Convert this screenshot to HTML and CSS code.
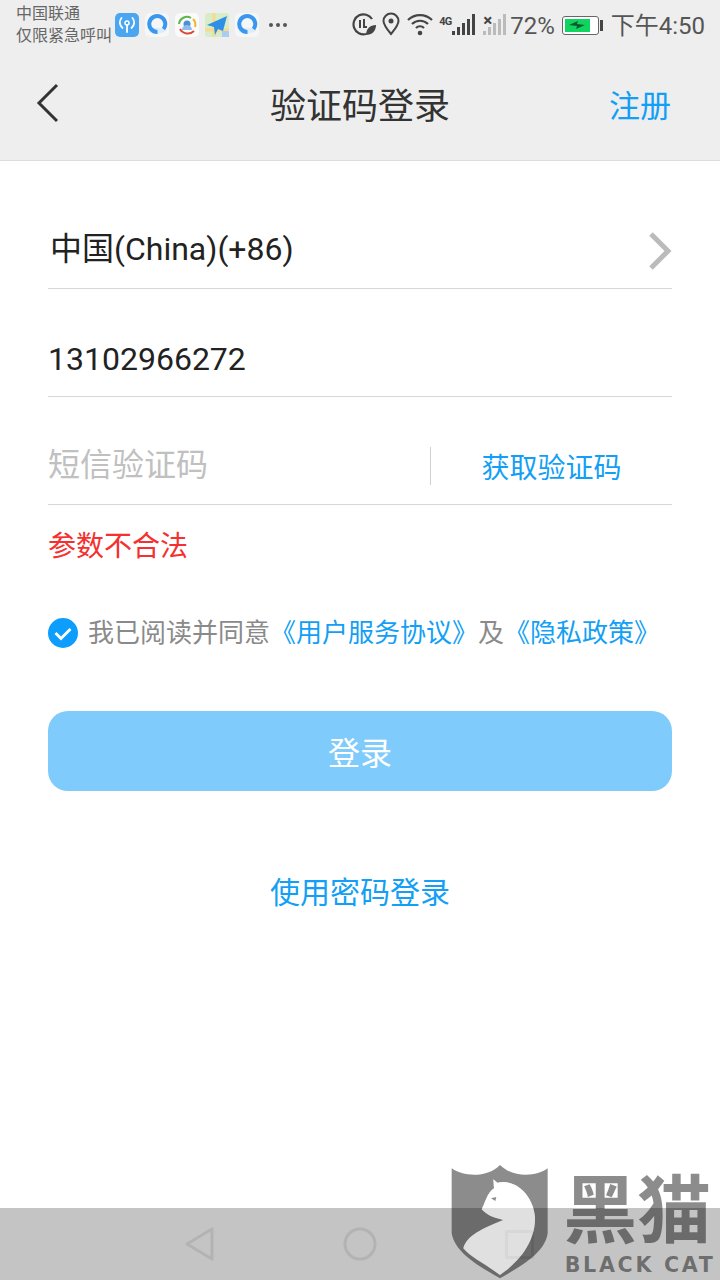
FILE: index.html
```html
<!DOCTYPE html>
<html lang="zh-CN">
<head>
    <meta charset="UTF-8">
    <meta name="viewport" content="width=device-width, initial-scale=1.0">
    <title>验证码登录</title>
    <link rel="stylesheet" href="styles.css">
</head>
<body>
    <div class="phone">
        <div class="status-bar">
            <div class="carrier">
                <span>中国联通</span>
                <span>仅限紧急呼叫</span>
            </div>
            <div class="app-icons">
                <svg class="app" viewBox="0 0 24 24">
                    <rect width="24" height="24" rx="5" fill="#4aa6f0"/>
                    <circle cx="12" cy="10" r="2" fill="none" stroke="#fff" stroke-width="1.5"/>
                    <path d="M12 12v7M7.500 15a7 7 0 0 1-1-10M16.500 15a7 7 0 0 0 1-10" fill="none" stroke="#fff" stroke-width="1.8" stroke-linecap="round"/>
                </svg>
                <svg class="app" viewBox="0 0 24 24">
                    <rect width="24" height="24" rx="5" fill="#f4f6f8"/>
                    <path d="M4 19q8 4 17-1v-3H4z" fill="#dcedfa"/>
                    <path d="M18.500 16a8 8 0 1 0-6 3" fill="none" stroke="#3a97ee" stroke-width="4"/>
                </svg>
                <svg class="app" viewBox="0 0 24 24">
                    <rect width="24" height="24" rx="5" fill="#fafafa"/>
                    <path d="M4 11a8 8 0 0 1 12-6" fill="none" stroke="#5fb548" stroke-width="2"/>
                    <path d="M18 6a8 8 0 0 1 2 8" fill="none" stroke="#f0b429" stroke-width="2"/>
                    <path d="M5 16a9 9 0 0 0 14 2" fill="none" stroke="#d9483b" stroke-width="2"/>
                    <circle cx="12" cy="11" r="3.500" fill="#4a90d9"/>
                    <path d="M7 17a5 5 0 0 1 10 0z" fill="#8fbce8"/>
                </svg>
                <svg class="app" viewBox="0 0 24 24">
                    <rect width="24" height="24" rx="3" fill="#d8ecc8"/>
                    <path d="M0 17h24M9 0v24" stroke="#f5dc8c" stroke-width="3"/>
                    <path d="M17 18h7v6h-7z" fill="#a9cdf2"/>
                    <path d="M22 3L2 12l7 2 1 8 3-6 5 2z" fill="#2f8fe6"/>
                </svg>
                <svg class="app" viewBox="0 0 24 24">
                    <rect width="24" height="24" rx="5" fill="#f4f6f8"/>
                    <path d="M4 19q8 4 17-1v-3H4z" fill="#dcedfa"/>
                    <path d="M18.500 16a8 8 0 1 0-6 3" fill="none" stroke="#3a97ee" stroke-width="4"/>
                </svg>
                <span class="more"><i></i><i></i><i></i></span>
            </div>
            <div class="sys-icons">
                <svg class="sys" width="24" height="24" viewBox="0 0 24 24">
                    <path d="M20 7a10 10 0 1 0-6 15" fill="none" stroke="#444" stroke-width="2.2"/>
                    <path d="M8 8v8M12 7v8h3" fill="none" stroke="#444" stroke-width="2"/>
                    <path d="M14 23c0-6 4-10 10-10 0 6-4 10-10 10z" fill="#444"/>
                </svg>
                <svg class="sys" width="20" height="24" viewBox="0 0 20 24">
                    <path d="M10 22C5 16 2.500 12.500 2.500 9a7.500 7.500 0 0 1 15 0c0 3.500-2.500 7-7.500 13z" fill="none" stroke="#444" stroke-width="2"/>
                    <circle cx="10" cy="9" r="2.500" fill="#444"/>
                </svg>
                <svg class="sys" width="28" height="24" viewBox="0 0 28 24">
                    <path d="M2 8a17 17 0 0 1 24 0M6 12a11.500 11.500 0 0 1 16 0M10 16a5.500 5.500 0 0 1 8 0" fill="none" stroke="#444" stroke-width="2.200"/>
                    <circle cx="14" cy="21" r="2.300" fill="#444"/>
                </svg>
                <span class="net">4G</span>
                <span class="bars">
                    <i class="b1"></i><i class="b2"></i><i class="b3"></i><i class="b4"></i><i class="b5"></i>
                </span>
                <span class="net cross">×</span>
                <span class="bars off">
                    <i class="b1"></i><i class="b2"></i><i class="b3"></i><i class="b4"></i><i class="b5"></i>
                </span>
                <span class="percent">72%</span>
                <span class="battery">
                    <span class="level">
                        <svg width="16" height="10" viewBox="0 0 16 10">
                            <path d="M0 5l9-4-1 3 8 1-9 4 1-3z" fill="#0d5a2c"/>
                        </svg>
                    </span>
                </span>
                <span class="battery-tip"></span>
                <span class="clock">下午4:50</span>
            </div>
        </div>

        <div class="top-bar">
            <svg class="back" width="24" height="40" viewBox="0 0 24 40">
                <path d="M21 2L3 20l18 18" fill="none" stroke="#333" stroke-width="3"/>
            </svg>
            <h1 class="title">验证码登录</h1>
            <a class="register">注册</a>
        </div>

        <div class="form">
            <div class="row">
                <span class="country">中国(China)(+86)</span>
                <svg width="24" height="40" viewBox="0 0 24 40">
                    <path d="M3 3l17 17L3 37" fill="none" stroke="#bbb" stroke-width="5"/>
                </svg>
            </div>
            <div class="row">
                <span class="phone-no">13102966272</span>
            </div>
            <div class="row">
                <span class="hint">短信验证码</span>
                <a class="get-code">获取验证码</a>
            </div>
            <p class="error">参数不合法</p>
            <div class="agree">
                <svg class="check" width="30" height="30" viewBox="0 0 30 30">
                    <circle cx="15" cy="15" r="15" fill="#0d9efd"/>
                    <path d="M7.500 15l5.500 5.500 9.500-9.500" fill="none" stroke="#fff" stroke-width="2.800"/>
                </svg>
                <span>我已阅读并同意</span>
                <a>《用户服务协议》</a>
                <span>及</span>
                <a>《隐私政策》</a>
            </div>
            <button class="login-btn">登录</button>
            <a class="pwd-login">使用密码登录</a>
        </div>

        <div class="nav-bar">
            <svg width="30" height="36" viewBox="0 0 30 36">
                <path d="M3 18L28 3v30z" fill="none" stroke="#b3b3b3" stroke-width="3" stroke-linejoin="round"/>
            </svg>
            <svg width="34" height="34" viewBox="0 0 34 34">
                <circle cx="17" cy="17" r="15" fill="none" stroke="#b3b3b3" stroke-width="3"/>
            </svg>
            <span class="nav-square"></span>
        </div>

        <!-- watermark sits on top of the page -->
        <svg class="watermark" width="300" height="130" viewBox="0 0 900 390">
            <path class="mark" fill-rule="evenodd" d="M95 55C130 80 200 85 240 45C280 85 350 80 383 55V250C375 310 300 350 240 385C180 350 105 310 95 250ZM220 88L232 98C290 85 340 140 345 200C348 280 290 340 240 375C200 345 150 320 130 295C140 255 190 235 250 210C230 205 205 200 185 178C195 160 200 130 222 115Z"/>
            <path class="cat" d="M220 88L232 98C290 85 340 140 345 200C348 280 290 340 240 375C200 345 150 320 130 295C140 255 190 235 250 210C230 205 205 200 185 178C195 160 200 130 222 115Z"/>
            <path class="mark" d="M213 145L229 141L226 153Z"/>
            <text class="wm-cn" x="430" y="262">黑猫</text>
            <text class="wm-en" x="434" y="365">BLACK CAT</text>
        </svg>
    </div>
</body>
</html>
```

FILE: styles.css
```css
* {
    padding: 0;
    margin: 0;
    box-sizing: border-box;
}

body {
    background-color: #ffffff;
    font-family: Roboto, "Noto Sans CJK SC", sans-serif;
}

a {
    color: #129ff5;
}

.phone {
    position: relative;
    width: 720px;
    height: 1280px;
    display: flex;
    flex-direction: column;
    overflow: hidden;
}

/* status bar */
.status-bar {
    height: 50px;
    padding: 2px 15px 0 16px;
    background-color: #eeeeee;
    display: flex;
    align-items: center;
    color: #444;
}

.carrier {
    display: flex;
    flex-direction: column;
    width: 99px;
    margin-bottom: 2px;
    font-size: 16px;
    line-height: 22px;
    color: #666;
    white-space: nowrap;
}

.app-icons {
    display: flex;
    align-items: center;
    gap: 6px;
    margin-bottom: 2px;
}

.app {
    width: 24px;
    height: 24px;
}

.more {
    display: flex;
    gap: 3px;
    margin-left: 4px;
}

.more i {
    width: 4px;
    height: 4px;
    border-radius: 50%;
    background-color: #555;
}

.sys-icons {
    margin-left: auto;
    display: flex;
    align-items: center;
}

.sys {
    margin: 0 5px 4px 0;
}

.net {
    align-self: flex-start;
    margin: 10px 1px 0 0;
    font-size: 11px;
    font-weight: 700;
    line-height: 12px;
    letter-spacing: -1px;
}

.net.cross {
    width: 10px;
    margin: 8px -10px 0 8px;
    font-size: 17px;
    letter-spacing: 0;
}

.bars {
    display: flex;
    align-items: flex-end;
    gap: 2px;
    height: 22px;
    margin-bottom: 4px;
}

.bars i {
    width: 3px;
    background-color: #444;
}

.bars.off i {
    background-color: #bbbbbb;
}

.b1 { height: 4px; }
.b2 { height: 8px; }
.b3 { height: 12px; }
.b4 { height: 16px; }
.b5 { height: 21px; }

.percent {
    margin-left: 4px;
    font-size: 24px;
    color: #555;
}

.battery {
    width: 37px;
    height: 19px;
    margin: 0 0 2px 7px;
    padding: 2px;
    border: 1px solid #666;
    border-radius: 3px;
    background-color: #fff;
}

.level {
    width: 25px;
    height: 13px;
    background-color: #0fd460;
    display: flex;
    align-items: center;
    justify-content: center;
}

.battery-tip {
    width: 3px;
    height: 11px;
    margin: 0 0 2px 1px;
    background-color: #444;
}

.clock {
    margin: 0 0 6px 8px;
    font-size: 24px;
    color: #555;
}

/* top bar */
.top-bar {
    height: 111px;
    padding: 0 49px 4px 36px;
    background-color: #eeeeee;
    border-bottom: 1px solid #dddddd;
    display: flex;
    align-items: center;
    justify-content: space-between;
    position: relative;
}

.title {
    font-size: 36px;
    font-weight: 400;
    color: #333;
    position: absolute;
    left: 0;
    right: 0;
    text-align: center;
}

.register {
    font-size: 31px;
    position: relative;
}

/* form */
.form {
    padding: 20px 48px 0;
    display: flex;
    flex-direction: column;
}

.row {
    height: 72px;
    margin-top: 36px;
    padding-bottom: 4px;
    border-bottom: 1px solid #d8d8d8;
    display: flex;
    align-items: center;
    justify-content: space-between;
}

.country {
    margin: 0 0 4px 2px;
    font-size: 32px;
    line-height: 44px;
    color: #222;
}

.phone-no {
    font-size: 32px;
    color: #222;
}

.hint {
    margin-bottom: 4px;
    font-size: 32px;
    line-height: 44px;
    color: #c0c0c0;
}

.get-code {
    width: 242px;
    height: 38px;
    margin-top: -2px;
    padding-top: 3px;
    border-left: 1px solid #d0d0d0;
    font-size: 28px;
    line-height: 38px;
    text-align: center;
}

.error {
    margin-top: 21px;
    font-size: 28px;
    line-height: 42px;
    color: #f5302e;
}

.agree {
    margin-top: 46px;
    display: flex;
    align-items: center;
    font-size: 26px;
    line-height: 38px;
    color: #8a8a8a;
    white-space: nowrap;
}

.check {
    margin-right: 10px;
}

.login-btn {
    height: 80px;
    margin-top: 59px;
    border: none;
    border-radius: 20px;
    background-color: #7ecbfc;
    color: #ffffff;
    font-family: inherit;
    font-size: 32px;
}

.pwd-login {
    margin-top: 80px;
    font-size: 30px;
    line-height: 44px;
    text-align: center;
}

/* nav bar */
.nav-bar {
    height: 72px;
    margin-top: auto;
    padding: 0 0 0 184px;
    background-color: #c4c4c4;
    display: flex;
    align-items: center;
}

.nav-bar svg:nth-child(2) {
    margin-left: 129px;
}

.nav-square {
    width: 29px;
    height: 29px;
    margin-left: 128px;
    border: 3px solid #b3b3b3;
    border-radius: 2px;
}

/* black cat watermark */
.watermark {
    position: absolute;
    right: 0;
    bottom: 0;
    overflow: visible;
}

.mark {
    fill: rgba(0, 0, 0, 0.45);
}

.cat {
    fill: rgba(255, 255, 255, 0.47);
}

.wm-cn {
    font-family: "Noto Sans CJK SC", sans-serif;
    font-size: 222px;
    font-weight: 700;
    fill: rgba(0, 0, 0, 0.45);
}

.wm-en {
    font-family: "DejaVu Sans", sans-serif;
    font-size: 62px;
    font-weight: 700;
    letter-spacing: 8px;
    fill: rgba(0, 0, 0, 0.45);
}
```
